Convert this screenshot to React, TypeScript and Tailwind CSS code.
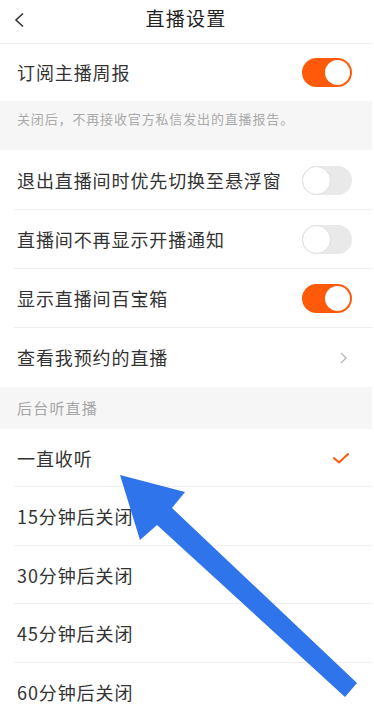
import React from "react";

const font = { fontFamily: '"Noto Sans CJK SC", "Noto Sans", sans-serif' };

function Toggle({ on }: { on: boolean }) {
  return on ? (
    <div className="w-[50px] h-[29px] rounded-full bg-[#ff5a0a] flex items-center justify-end pr-[2px]">
      <div className="w-[25px] h-[25px] rounded-full bg-white" />
    </div>
  ) : (
    <div className="w-[50px] h-[29px] rounded-full bg-[#e9e9e9] flex items-center">
      <div className="w-[29px] h-[29px] rounded-full bg-white border border-[#dedede]" />
    </div>
  );
}

function Row({ label, right, divider = true, h = "h-[59px]" }: { label: string; right?: React.ReactNode; divider?: boolean; h?: string }) {
  return (
    <div className={`${h} flex items-center pl-[17px] relative`}>
      <span className="flex-1 text-[18px] tracking-[0.9px] text-[#333333]">{label}</span>
      <div className="pr-[20px] flex items-center">{right}</div>
      {divider && <div className="absolute left-[14px] right-0 bottom-0 h-px bg-[#efefef]" />}
    </div>
  );
}

export default function App() {
  const chevron = (
    <svg width="10" height="14" viewBox="0 0 10 14" className="mr-[4px]">
      <path d="M3 2 L8 7 L3 12" fill="none" stroke="#b5b5b5" strokeWidth="1.3" />
    </svg>
  );
  const check = (
    <svg width="18" height="14" viewBox="0 0 18 14" className="mr-[2px]">
      <path d="M2 7 L7 11.5 L16 3" fill="none" stroke="#ff5a0a" strokeWidth="2" strokeLinecap="round" strokeLinejoin="round" />
    </svg>
  );
  return (
    <div className="w-[374px] h-[712px] bg-white overflow-hidden relative" style={font}>
      <div className="w-[372px]">
        <div className="h-[44px] relative flex items-center justify-center border-b border-[#f1f1f1]">
          <svg width="12" height="16" viewBox="0 0 12 16" className="absolute left-[13px] top-[12px]">
            <path d="M10 1.5 L3 8 L10 14.5" fill="none" stroke="#333" strokeWidth="1.6" />
          </svg>
          <span className="text-[19px] tracking-[1.3px] text-[#222222] -mt-[6px]">直播设置</span>
        </div>
        <Row label="订阅主播周报" right={<Toggle on />} divider={false} h="h-[57px]" />
        <div className="h-[49px] bg-[#f6f6f6] pl-[17px] pt-[8px] text-[13px] tracking-[0.85px] text-[#aaaaaa]">关闭后，不再接收官方私信发出的直播报告。</div>
        <Row label="退出直播间时优先切换至悬浮窗" right={<Toggle on={false} />} h="h-[60px]" />
        <Row label="直播间不再显示开播通知" right={<Toggle on={false} />} />
        <Row label="显示直播间百宝箱" right={<Toggle on />} />
        <Row label="查看我预约的直播" right={chevron} divider={false} />
        <div className="h-[42px] bg-[#f6f6f6] pl-[17px] flex items-center text-[15px] tracking-[1.2px] text-[#a6a6a6]">后台听直播</div>
        <Row label="一直收听" right={check} h="h-[58px]" />
        <Row label="15分钟后关闭" h="h-[59px]" />
        <Row label="30分钟后关闭" h="h-[58px]" />
        <Row label="45分钟后关闭" h="h-[59px]" />
        <Row label="60分钟后关闭" divider={false} h="h-[58px]" />
      </div>
      <svg className="absolute left-0 top-0 pointer-events-none" width="374" height="712" viewBox="0 0 374 712">
        <polygon points="120,475 185,492 172,508 357,683 345,697 157,525 140,540" fill="#2f74ea" />
      </svg>
    </div>
  );
}
